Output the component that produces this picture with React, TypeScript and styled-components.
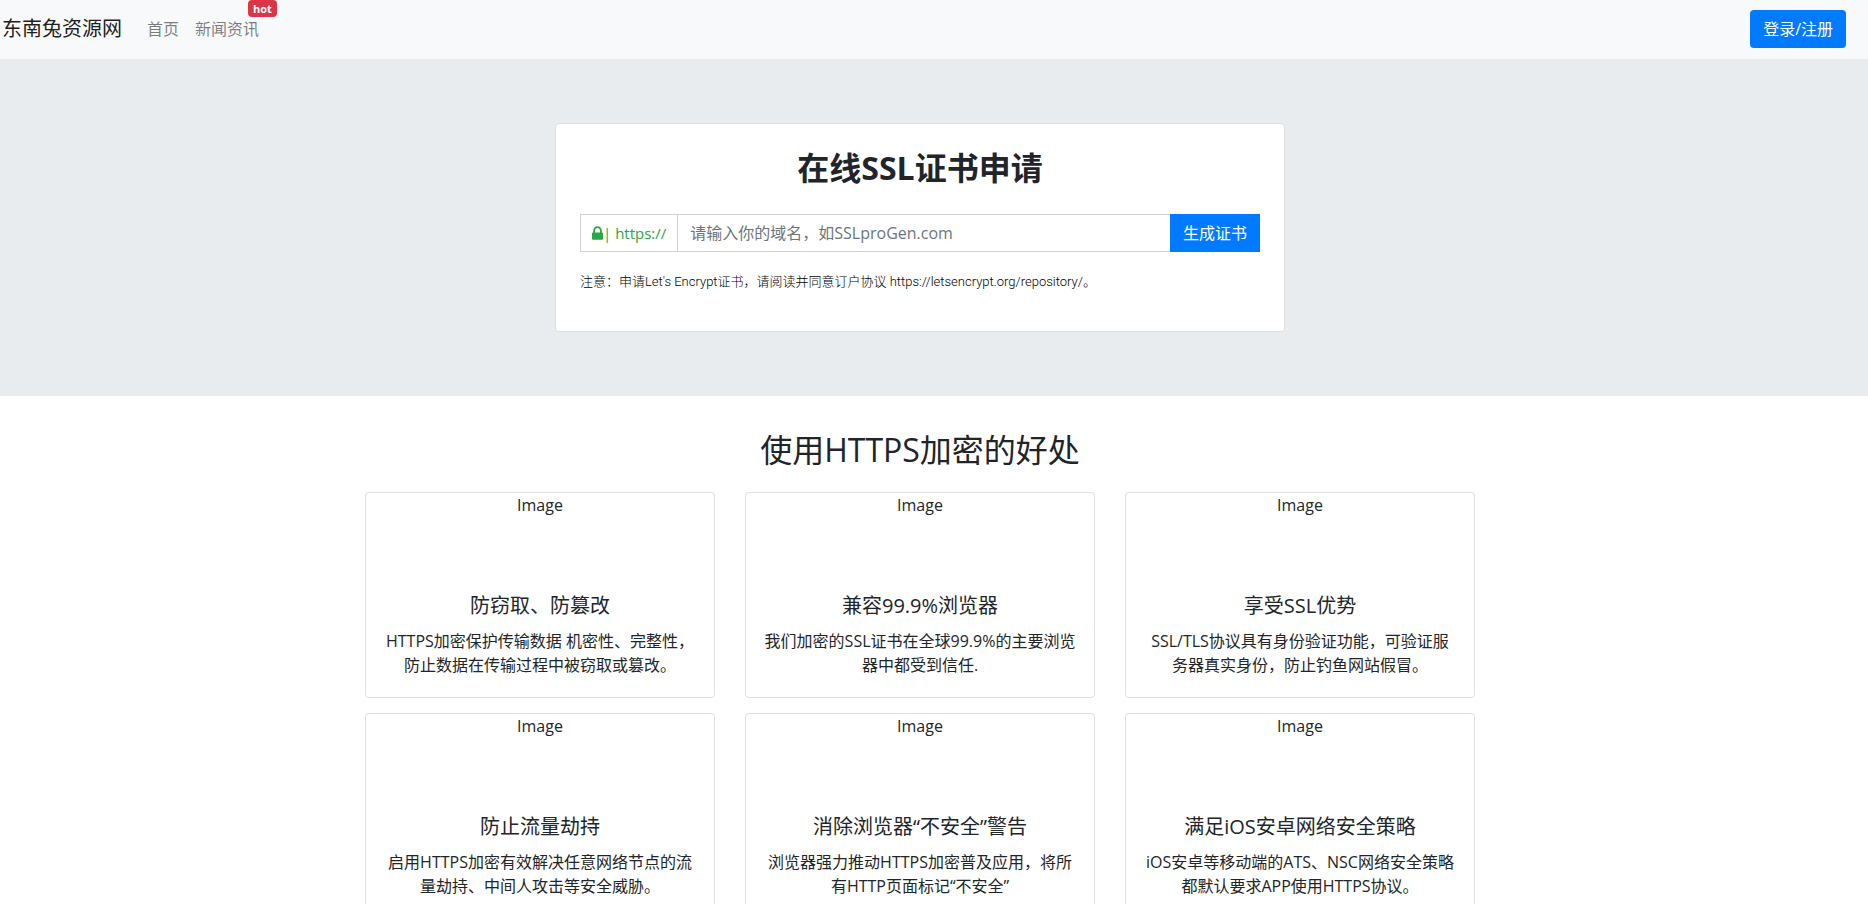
import React from "react";
import styled, { createGlobalStyle } from "styled-components";

const fonts = '"Open Sans", "Noto Sans CJK SC", sans-serif';

const GlobalStyle = createGlobalStyle`
  *, *::before, *::after { box-sizing: border-box; }
  body {
    margin: 0;
    background: #fff;
    color: #212529;
    font-family: ${fonts};
    font-size: 16px;
    line-height: 24px;
  }
  h1, h2, h3, p { margin: 0; }
  button, input { font: inherit; }
`;

const Navbar = styled.nav`
  display: flex;
  align-items: center;
  min-height: 59px;
  padding: 0 22px 1px 2px;
  background: #f8f9fa;
`;

const Brand = styled.a`
  margin-right: 25px;
  color: rgba(0, 0, 0, 0.9);
  font-size: 20px;
  line-height: 30px;
  text-decoration: none;
`;

const NavList = styled.ul`
  display: flex;
  gap: 16px;
  margin: 0 auto 0 0;
  padding: 0;
  list-style: none;
`;

const NavItem = styled.li`
  position: relative;
`;

const NavLink = styled.a`
  color: rgba(0, 0, 0, 0.5);
  text-decoration: none;
`;

const Badge = styled.span`
  position: absolute;
  top: -17px;
  left: 53px;
  padding: 0 5px;
  border-radius: 4px;
  background: #dc3545;
  color: #fff;
  font-size: 11px;
  font-weight: 700;
  line-height: 17px;
`;

const Button = styled.button<{ $square?: boolean }>`
  height: 38px;
  padding: 0 13px;
  border: 0;
  border-radius: ${(p) => (p.$square ? 0 : 4)}px;
  background: #007bff;
  color: #fff;
  white-space: nowrap;
  cursor: pointer;
`;

const Hero = styled.header`
  padding: 64px 43px 64px 15px;
  background: #e9ecef;
`;

const Panel = styled.div`
  max-width: 730px;
  min-height: 209px;
  margin: 0 auto;
  padding: 24px;
  border: 1px solid #dfdfdf;
  border-radius: 4px;
  background: #fff;
`;

const PanelTitle = styled.h1`
  margin-bottom: 26px;
  font-size: 32px;
  font-weight: 700;
  line-height: 40px;
  text-align: center;
`;

const DomainForm = styled.form`
  display: flex;
`;

const Prefix = styled.label`
  display: flex;
  align-items: center;
  padding: 0 11px;
  border: 1px solid #ced4da;
  border-right: 0;
  color: #28a745;
  font-size: 15px;
  white-space: pre;
`;

const LockIcon = styled.svg`
  width: 11px;
  height: 14px;
  fill: currentColor;
`;

const DomainInput = styled.input`
  flex: 1;
  min-width: 0;
  height: 38px;
  padding: 0 12px;
  border: 1px solid #ced4da;
  border-right: 0;
  border-radius: 0;
  background: #fff;
  color: #495057;

  &::placeholder {
    color: #6c757d;
    opacity: 1;
  }
`;

const Note = styled.p`
  margin-top: 18px;
  color: #000;
  font-family: Roboto, "Noto Sans CJK SC", sans-serif;
  font-size: 13px;
  font-weight: 300;
`;

const Benefits = styled.main`
  padding: 34px 43px 15px 15px;
`;

const SectionTitle = styled.h2`
  margin-bottom: 22px;
  font-size: 32px;
  font-weight: 400;
  line-height: 40px;
  text-align: center;
`;

const Grid = styled.div`
  display: grid;
  grid-template-columns: repeat(3, minmax(0, 1fr));
  gap: 15px 30px;
  max-width: 1110px;
  margin: 0 auto;

  @media (max-width: 900px) {
    grid-template-columns: 1fr;
  }
`;

const Card = styled.article`
  border: 1px solid #dfdfdf;
  border-radius: 4px;
  text-align: center;
`;

const CardImage = styled.div`
  height: 80px;
`;

const CardBody = styled.div`
  padding: 21px 16px 20px;
`;

const CardTitle = styled.h3`
  margin-bottom: 11px;
  font-size: 20px;
  font-weight: 400;
  line-height: 24px;
`;

const benefits = [
  {
    title: "防窃取、防篡改",
    text: ["HTTPS加密保护传输数据 机密性、完整性，", "防止数据在传输过程中被窃取或篡改。"],
  },
  {
    title: "兼容99.9%浏览器",
    text: ["我们加密的SSL证书在全球99.9%的主要浏览", "器中都受到信任."],
  },
  {
    title: "享受SSL优势",
    text: ["SSL/TLS协议具有身份验证功能，可验证服", "务器真实身份，防止钓鱼网站假冒。"],
  },
  {
    title: "防止流量劫持",
    text: ["启用HTTPS加密有效解决任意网络节点的流", "量劫持、中间人攻击等安全威胁。"],
  },
  {
    title: "消除浏览器“不安全”警告",
    text: ["浏览器强力推动HTTPS加密普及应用，将所", "有HTTP页面标记“不安全”"],
  },
  {
    title: "满足iOS安卓网络安全策略",
    text: ["iOS安卓等移动端的ATS、NSC网络安全策略", "都默认要求APP使用HTTPS协议。"],
  },
];

export default function App() {
  return (
    <>
      <GlobalStyle />
      <Navbar>
        <Brand href="#">东南兔资源网</Brand>
        <NavList>
          <NavItem>
            <NavLink href="#">首页</NavLink>
          </NavItem>
          <NavItem>
            <NavLink href="#">新闻资讯</NavLink>
            <Badge>hot</Badge>
          </NavItem>
        </NavList>
        <Button type="button">登录/注册</Button>
      </Navbar>
      <Hero>
        <Panel>
          <PanelTitle>在线SSL证书申请</PanelTitle>
          <DomainForm onSubmit={(e) => e.preventDefault()}>
            <Prefix htmlFor="domain">
              <LockIcon viewBox="0 128 1152 1408" aria-hidden="true">
                <path d="M320 768h512V576q0-106-75-181t-181-75-181 75-75 181v192zm832 96v576q0 40-28 68t-68 28H96q-40 0-68-28t-28-68V864q0-40 28-68t68-28h32V576q0-184 132-316t316-132 316 132 132 316v192h32q40 0 68 28t28 68z" />
              </LockIcon>
              | https://
            </Prefix>
            <DomainInput
              id="domain"
              type="text"
              placeholder="请输入你的域名，如SSLproGen.com"
            />
            <Button type="submit" $square>
              生成证书
            </Button>
          </DomainForm>
          <Note>
            注意：申请Let's Encrypt证书，请阅读并同意订户协议 https://letsencrypt.org/repository/。
          </Note>
        </Panel>
      </Hero>
      <Benefits>
        <SectionTitle>使用HTTPS加密的好处</SectionTitle>
        <Grid>
          {benefits.map((item) => (
            <Card key={item.title}>
              <CardImage>Image</CardImage>
              <CardBody>
                <CardTitle>{item.title}</CardTitle>
                <p>
                  {item.text[0]}
                  <br />
                  {item.text[1]}
                </p>
              </CardBody>
            </Card>
          ))}
        </Grid>
      </Benefits>
    </>
  );
}
